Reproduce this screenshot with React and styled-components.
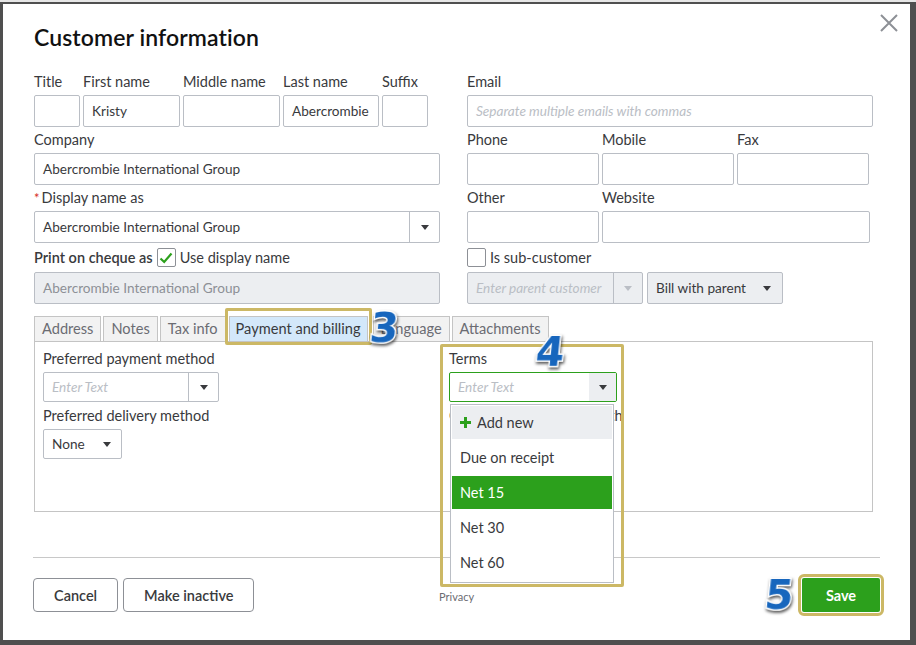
import React from 'react'
import styled, { createGlobalStyle } from 'styled-components'

const GlobalStyle = createGlobalStyle`
  body{
    margin:0;
    background:#4f4f4f;
    font-family: Lato, "Open Sans", sans-serif;
    color:#393a3d;
  }
`

const Page = styled.div`
  width:916px;
  height:645px;
  box-sizing:border-box;
  padding:4px 6px 5px 3px;
  background:linear-gradient(#e6e6e6 0 2px, #4f4f4f 2px);
  overflow:hidden;
`

const Modal = styled.div`
  position:relative;
  height:636px;
  box-sizing:border-box;
  padding:0 37px 0 31px;
  background:#fff;
  display:flex;
  flex-direction:column;
`

const Header = styled.div`
  display:flex;
  justify-content:space-between;
  align-items:flex-start;
`

const Title = styled.h1`
  margin:0;
  padding-top:20px;
  font-size:23px;
  line-height:26px;
  font-weight:600;
  color:#111;
  letter-spacing:0.1px;
`

const Close = styled.button`
  margin:10px -25px 0 0;
  padding:0;
  width:18px;
  height:18px;
  border:none;
  background:none;
  svg{ display:block; }
`

const FormGrid = styled.div`
  margin-top:22px;
  display:grid;
  grid-template-columns:406px 406px;
  column-gap:27px;
  row-gap:3px;
`

const Row = styled.div`
  display:grid;
  grid-template-columns:${p => p.cols};
  column-gap:3px;
`

const Field = styled.div`
  display:flex;
  flex-direction:column;
  margin-top:${p => p.mt || 0}px;
`

const Label = styled.label`
  font-size:14.5px;
  line-height:20px;
  height:20px;
  color:#393a3d;
  white-space:nowrap;
  margin-bottom:3px;
  span{ color:#d52b1e; margin-right:2px; font-size:13px; }
`

const Input = styled.div`
  height:${p => p.h || 32}px;
  width:${p => p.w || 'auto'};
  box-sizing:border-box;
  border:1px solid #babec5;
  border-radius:2px;
  background:${p => (p.disabled ? '#eceef1' : '#fff')};
  padding:0 8px;
  display:flex;
  align-items:center;
  font-size:13.6px;
  color:${p => (p.disabled ? '#8d9096' : '#393a3d')};
  white-space:nowrap;
  overflow:hidden;
`

const Placeholder = styled.span`
  font-style:italic;
  color:#babec5;
  font-size:13.6px;
`

const SelectBox = styled.div`
  display:flex;
  height:${p => p.h || 32}px;
  width:${p => p.w || 'auto'};
  box-sizing:border-box;
  border:1px solid ${p => (p.focus ? '#2ca01c' : '#babec5')};
  border-radius:2px;
  background:${p => (p.disabled ? '#eceef1' : '#fff')};
  overflow:hidden;
`

const SelectValue = styled.div`
  flex:1;
  padding:0 8px;
  display:flex;
  align-items:center;
  font-size:13.6px;
  color:#393a3d;
  white-space:nowrap;
  overflow:hidden;
`

const Caret = styled.div`
  width:${p => p.w || 29}px;
  flex:none;
  display:flex;
  align-items:center;
  justify-content:center;
  border-left:${p => (p.sep ? '1px solid #babec5' : 'none')};
  background:${p => p.bg || 'transparent'};
  &::after{
    content:"";
    border-left:4.5px solid transparent;
    border-right:4.5px solid transparent;
    border-top:5px solid ${p => p.color || '#393a3d'};
  }
`

const CheckRow = styled.div`
  height:23px;
  display:flex;
  align-items:center;
  font-size:14.5px;
  color:#393a3d;
  gap:4px;
  b{ font-weight:600; }
`

const Box = styled.span`
  width:19px;
  height:19px;
  box-sizing:border-box;
  border:1px solid #8d9096;
  border-radius:2px;
  display:flex;
  align-items:center;
  justify-content:center;
  background:#fff;
`

const ParentRow = styled.div`
  display:flex;
  gap:4px;
`

const Tabs = styled.div`
  margin-top:12px;
  display:flex;
  gap:2px;
  height:25px;
`

const Tab = styled.div`
  position:relative;
  height:25px;
  box-sizing:border-box;
  padding:0 ${p => (p.active ? 6 : 7)}px;
  border:1px solid #c4c4c4;
  border-bottom:none;
  background:${p => (p.active ? '#d3e8fa' : '#f2f2f2')};
  color:${p => (p.active ? '#393a3d' : '#6b6c72')};
  font-size:14.6px;
  line-height:24px;
  white-space:nowrap;
  margin:${p => (p.active ? '0 3px 0 1px' : '0')};
  ${p => p.active && `
    &::after{
      content:"";
      position:absolute;
      left:-5px; right:-5px; top:-9px; bottom:-4px;
      border:3px solid #ccb865;
      border-radius:2px;
    }
  `}
`

const Marker = styled.span`
  display:inline-block;
  font-family:"DejaVu Sans", "Liberation Sans", sans-serif;
  font-weight:700;
  font-size:41px;
  line-height:40px;
  color:#1766bd;
  -webkit-text-stroke:3px #fff;
  paint-order:stroke fill;
  transform:skewX(-6deg);
  filter:drop-shadow(1px 2px 1.5px rgba(0,0,0,.65));
  ${p => p.over && `
    position:absolute;
    left:${p.x}px;
    top:${p.y}px;
    z-index:3;
  `}
`

const Panel = styled.div`
  height:171px;
  box-sizing:border-box;
  border:1px solid #c4c4c4;
  padding:7px 8px;
  display:grid;
  grid-template-columns:406px 1fr;
`

const TermsField = styled.div`
  position:relative;
  display:flex;
  flex-direction:column;
`

const Frame = styled.div`
  position:absolute;
  left:-9px;
  top:-5px;
  width:184px;
  height:243px;
  box-sizing:border-box;
  border:3px solid #ccb865;
  border-radius:2px;
  z-index:2;
  pointer-events:none;
`

const Menu = styled.ul`
  position:absolute;
  left:1px;
  top:55px;
  width:164px;
  margin:0;
  padding:1px;
  box-sizing:border-box;
  list-style:none;
  background:#fff;
  border:1px solid #babec5;
  z-index:1;
`

const MenuItem = styled.li`
  height:33px;
  margin-bottom:2px;
  padding:0 9px 0 8px;
  display:flex;
  align-items:center;
  gap:6px;
  font-size:14.5px;
  background:${p => (p.selected ? '#2ca01c' : p.hover ? '#eceef1' : 'transparent')};
  color:${p => (p.selected ? '#fff' : '#393a3d')};
`

const Divider = styled.div`
  margin:45px -7px 0 -1px;
  height:1px;
  background:#c8c8c8;
`

const Footer = styled.div`
  margin:20px -7px 0 -1px;
  height:34px;
  display:flex;
  align-items:center;
`

const LeftButtons = styled.div`
  width:406px;
  display:flex;
  gap:5px;
`

const Button = styled.button`
  height:34px;
  padding:0 ${p => p.px || 20}px;
  box-sizing:border-box;
  border:1px solid #8d9096;
  border-radius:4px;
  background:#fff;
  font-family:inherit;
  font-size:14.5px;
  font-weight:600;
  color:#393a3d;
`

const Privacy = styled.span`
  font-size:11px;
  color:#6b6c72;
  margin-top:2px;
`

const SaveGroup = styled.div`
  margin-left:auto;
  height:34px;
  display:flex;
  align-items:center;
  gap:8px;
`

const Save = styled.button`
  width:78px;
  height:34px;
  border:none;
  border-radius:2px;
  background:#2ca01c;
  color:#fff;
  font-family:inherit;
  font-size:14.5px;
  font-weight:700;
  outline:3px solid #ccb865;
  outline-offset:1px;
`

const Check = () => (
  <svg width="14" height="12" viewBox="0 0 14 12">
    <path d="M1.5 6.5 L5.2 10 L12.5 1.5" fill="none" stroke="#2ca01c" strokeWidth="2.2" />
  </svg>
)

const Plus = () => (
  <svg width="11" height="11" viewBox="0 0 11 11">
    <rect x="4" y="0" width="3" height="11" fill="#2ca01c" />
    <rect x="0" y="4" width="11" height="3" fill="#2ca01c" />
  </svg>
)

const tabs = ['Address', 'Notes', 'Tax info', 'Payment and billing', 'Language', 'Attachments']
const terms = ['Due on receipt', 'Net 15', 'Net 30', 'Net 60']

export default function App() {
  return (
    <Page>
      <GlobalStyle />
      <Modal>
        <Header>
          <Title>Customer information</Title>
          <Close aria-label="Close">
            <svg width="18" height="18" viewBox="0 0 18 18">
              <path d="M1 1 L17 17 M17 1 L1 17" stroke="#8d9096" strokeWidth="2" />
            </svg>
          </Close>
        </Header>

        <FormGrid>
          <Row cols="46px 97px 97px 96px 46px">
            <Field><Label>Title</Label><Input /></Field>
            <Field><Label>First name</Label><Input>Kristy</Input></Field>
            <Field><Label>Middle name</Label><Input /></Field>
            <Field><Label>Last name</Label><Input>Abercrombie</Input></Field>
            <Field><Label>Suffix</Label><Input /></Field>
          </Row>
          <Field>
            <Label>Email</Label>
            <Input><Placeholder>Separate multiple emails with commas</Placeholder></Input>
          </Field>

          <Field>
            <Label>Company</Label>
            <Input>Abercrombie International Group</Input>
          </Field>
          <Row cols="132px 132px 132px">
            <Field><Label>Phone</Label><Input /></Field>
            <Field><Label>Mobile</Label><Input /></Field>
            <Field><Label>Fax</Label><Input /></Field>
          </Row>

          <Field>
            <Label><span>*</span>Display name as</Label>
            <SelectBox>
              <SelectValue>Abercrombie International Group</SelectValue>
              <Caret sep w={29} />
            </SelectBox>
          </Field>
          <Row cols="132px 268px">
            <Field><Label>Other</Label><Input /></Field>
            <Field><Label>Website</Label><Input /></Field>
          </Row>

          <CheckRow>
            <b>Print on cheque as</b>
            <Box><Check /></Box>
            Use display name
          </CheckRow>
          <CheckRow>
            <Box />
            Is sub-customer
          </CheckRow>

          <Input disabled>Abercrombie International Group</Input>
          <ParentRow>
            <SelectBox disabled w="176px">
              <SelectValue><Placeholder>Enter parent customer</Placeholder></SelectValue>
              <Caret sep w={28} color="#babec5" />
            </SelectBox>
            <SelectBox disabled w="136px">
              <SelectValue>Bill with parent</SelectValue>
              <Caret w={30} />
            </SelectBox>
          </ParentRow>
        </FormGrid>

        <Tabs>
          {tabs.map(t => (
            <Tab key={t} active={t === 'Payment and billing'}>
              {t}
              {t === 'Payment and billing' && <Marker over x={140} y={-9}>3</Marker>}
            </Tab>
          ))}
        </Tabs>

        <Panel>
          <div>
            <Field>
              <Label>Preferred payment method</Label>
              <SelectBox h={30} w="176px">
                <SelectValue><Placeholder>Enter Text</Placeholder></SelectValue>
                <Caret sep w={29} />
              </SelectBox>
            </Field>
            <Field mt={4}>
              <Label>Preferred delivery method</Label>
              <SelectBox h={30} w="79px">
                <SelectValue>None</SelectValue>
                <Caret w={28} />
              </SelectBox>
            </Field>
          </div>
          <TermsField>
            <Label>Terms</Label>
            <SelectBox focus h={30} w="168px">
              <SelectValue><Placeholder>Enter Text</Placeholder></SelectValue>
              <Caret w={27} bg="#eceef1" />
            </SelectBox>
            <Label style={{ marginTop: 4 }}>Opening balance for month</Label>
            <Menu>
              <MenuItem hover><Plus />Add new</MenuItem>
              {terms.map(t => (
                <MenuItem key={t} selected={t === 'Net 15'}>{t}</MenuItem>
              ))}
            </Menu>
            <Frame />
            <Marker over x={87} y={-17}>4</Marker>
          </TermsField>
        </Panel>

        <Divider />

        <Footer>
          <LeftButtons>
            <Button px={20}>Cancel</Button>
            <Button px={20}>Make inactive</Button>
          </LeftButtons>
          <Privacy>Privacy</Privacy>
          <SaveGroup>
            <Marker>5</Marker>
            <Save>Save</Save>
          </SaveGroup>
        </Footer>
      </Modal>
    </Page>
  )
}
